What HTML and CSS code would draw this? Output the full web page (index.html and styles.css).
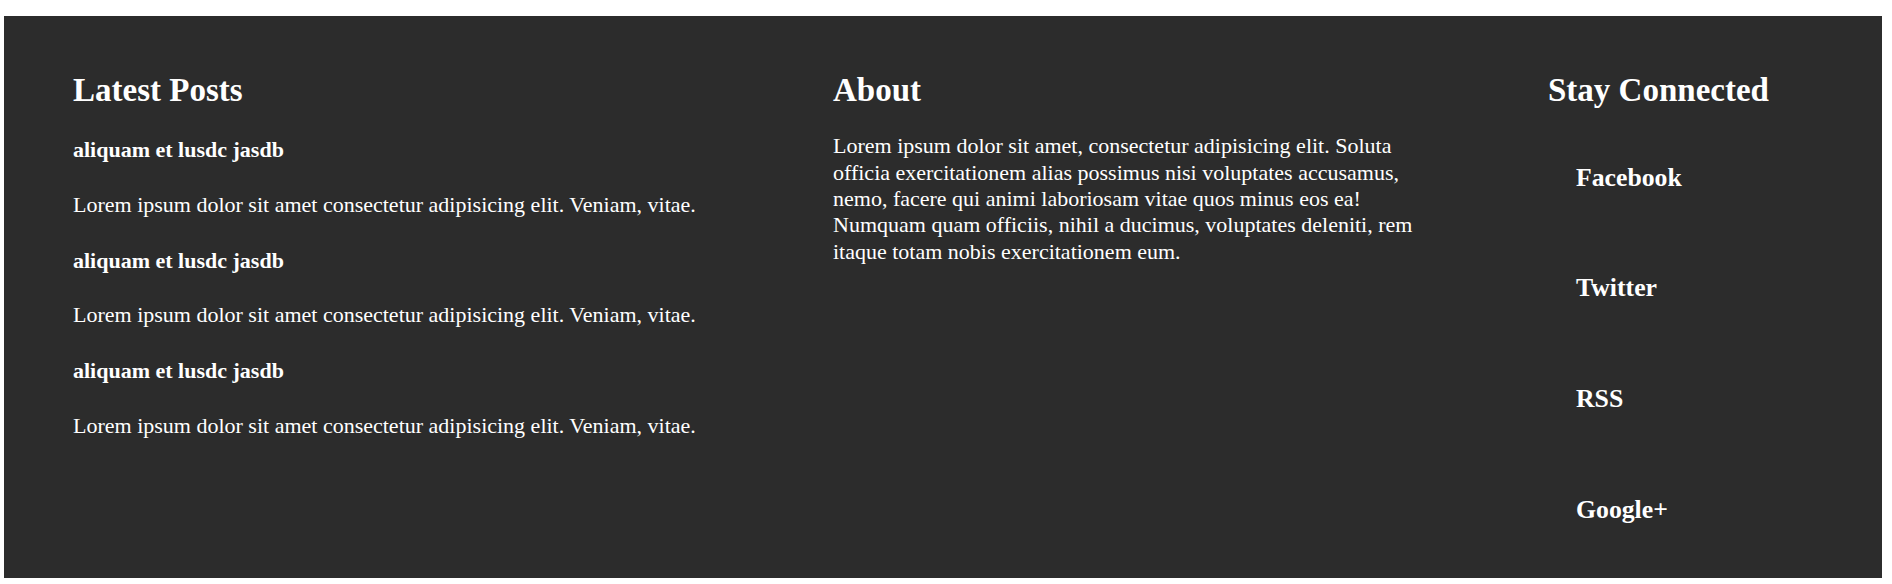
FILE: index.html
```html
<!DOCTYPE html>
<html lang="en">
<head>
<meta charset="utf-8">
<title>Footer</title>
<link rel="stylesheet" href="styles.css">
</head>
<body>
<footer class="site-footer">
  <section class="col col-posts">
    <h2 class="col-title">Latest Posts</h2>
    <div class="posts">
      <article class="post">
        <h4 class="post-title">aliquam et lusdc jasdb</h4>
        <p class="post-text">Lorem ipsum dolor sit amet consectetur adipisicing elit. Veniam, vitae.</p>
      </article>
      <article class="post">
        <h4 class="post-title">aliquam et lusdc jasdb</h4>
        <p class="post-text">Lorem ipsum dolor sit amet consectetur adipisicing elit. Veniam, vitae.</p>
      </article>
      <article class="post">
        <h4 class="post-title">aliquam et lusdc jasdb</h4>
        <p class="post-text">Lorem ipsum dolor sit amet consectetur adipisicing elit. Veniam, vitae.</p>
      </article>
    </div>
  </section>
  <section class="col col-about">
    <h2 class="col-title">About</h2>
    <p class="about-text">Lorem ipsum dolor sit amet, consectetur adipisicing elit. Soluta officia exercitationem alias possimus nisi voluptates accusamus, nemo, facere qui animi laboriosam vitae quos minus eos ea! Numquam quam officiis, nihil a ducimus, voluptates deleniti, rem itaque totam nobis exercitationem eum.</p>
  </section>
  <section class="col col-social">
    <h2 class="col-title">Stay Connected</h2>
    <ul class="social-list">
      <li class="social-item"><a class="social-link" href="#">Facebook</a></li>
      <li class="social-item"><a class="social-link" href="#">Twitter</a></li>
      <li class="social-item"><a class="social-link" href="#">RSS</a></li>
      <li class="social-item"><a class="social-link" href="#">Google+</a></li>
    </ul>
  </section>
</footer>
</body>
</html>
```

FILE: styles.css
```css
html, body {
  margin: 0;
  padding: 0;
  background: #ffffff;
}

body {
  font-family: "Liberation Serif", "Times New Roman", serif;
  font-size: 22px;
  color: #ffffff;
}

.site-footer {
  margin: 16px 10px 0 4px;
  padding: 55px 69px 53px 69px;
  background: #2c2c2c;
  display: grid;
  grid-template-columns: 760px 715px 1fr;
  align-items: start;
}

.col-title {
  margin: 0;
  font-size: 33px;
  line-height: 38px;
  font-weight: bold;
}

.posts {
  margin-top: 28px;
}

.post-title {
  margin: 0 0 29.5px;
  font-size: 22px;
  line-height: 25px;
  font-weight: bold;
}

.post-text {
  margin: 0 0 31px;
  font-size: 22px;
  line-height: 25px;
}

.post:last-child .post-text {
  margin-bottom: 0;
}

.about-text {
  margin: 24.4px 0 0;
  max-width: 600px;
  font-size: 22px;
  line-height: 26.3px;
}

.social-list {
  list-style: none;
  margin: 53.5px 0 0;
  padding: 0 0 0 28px;
  display: flex;
  flex-direction: column;
  gap: 80.8px;
}

.social-item {
  font-size: 25.74px;
  line-height: 30px;
  font-weight: bold;
}

.social-link {
  color: #ffffff;
  text-decoration: none;
}
```
